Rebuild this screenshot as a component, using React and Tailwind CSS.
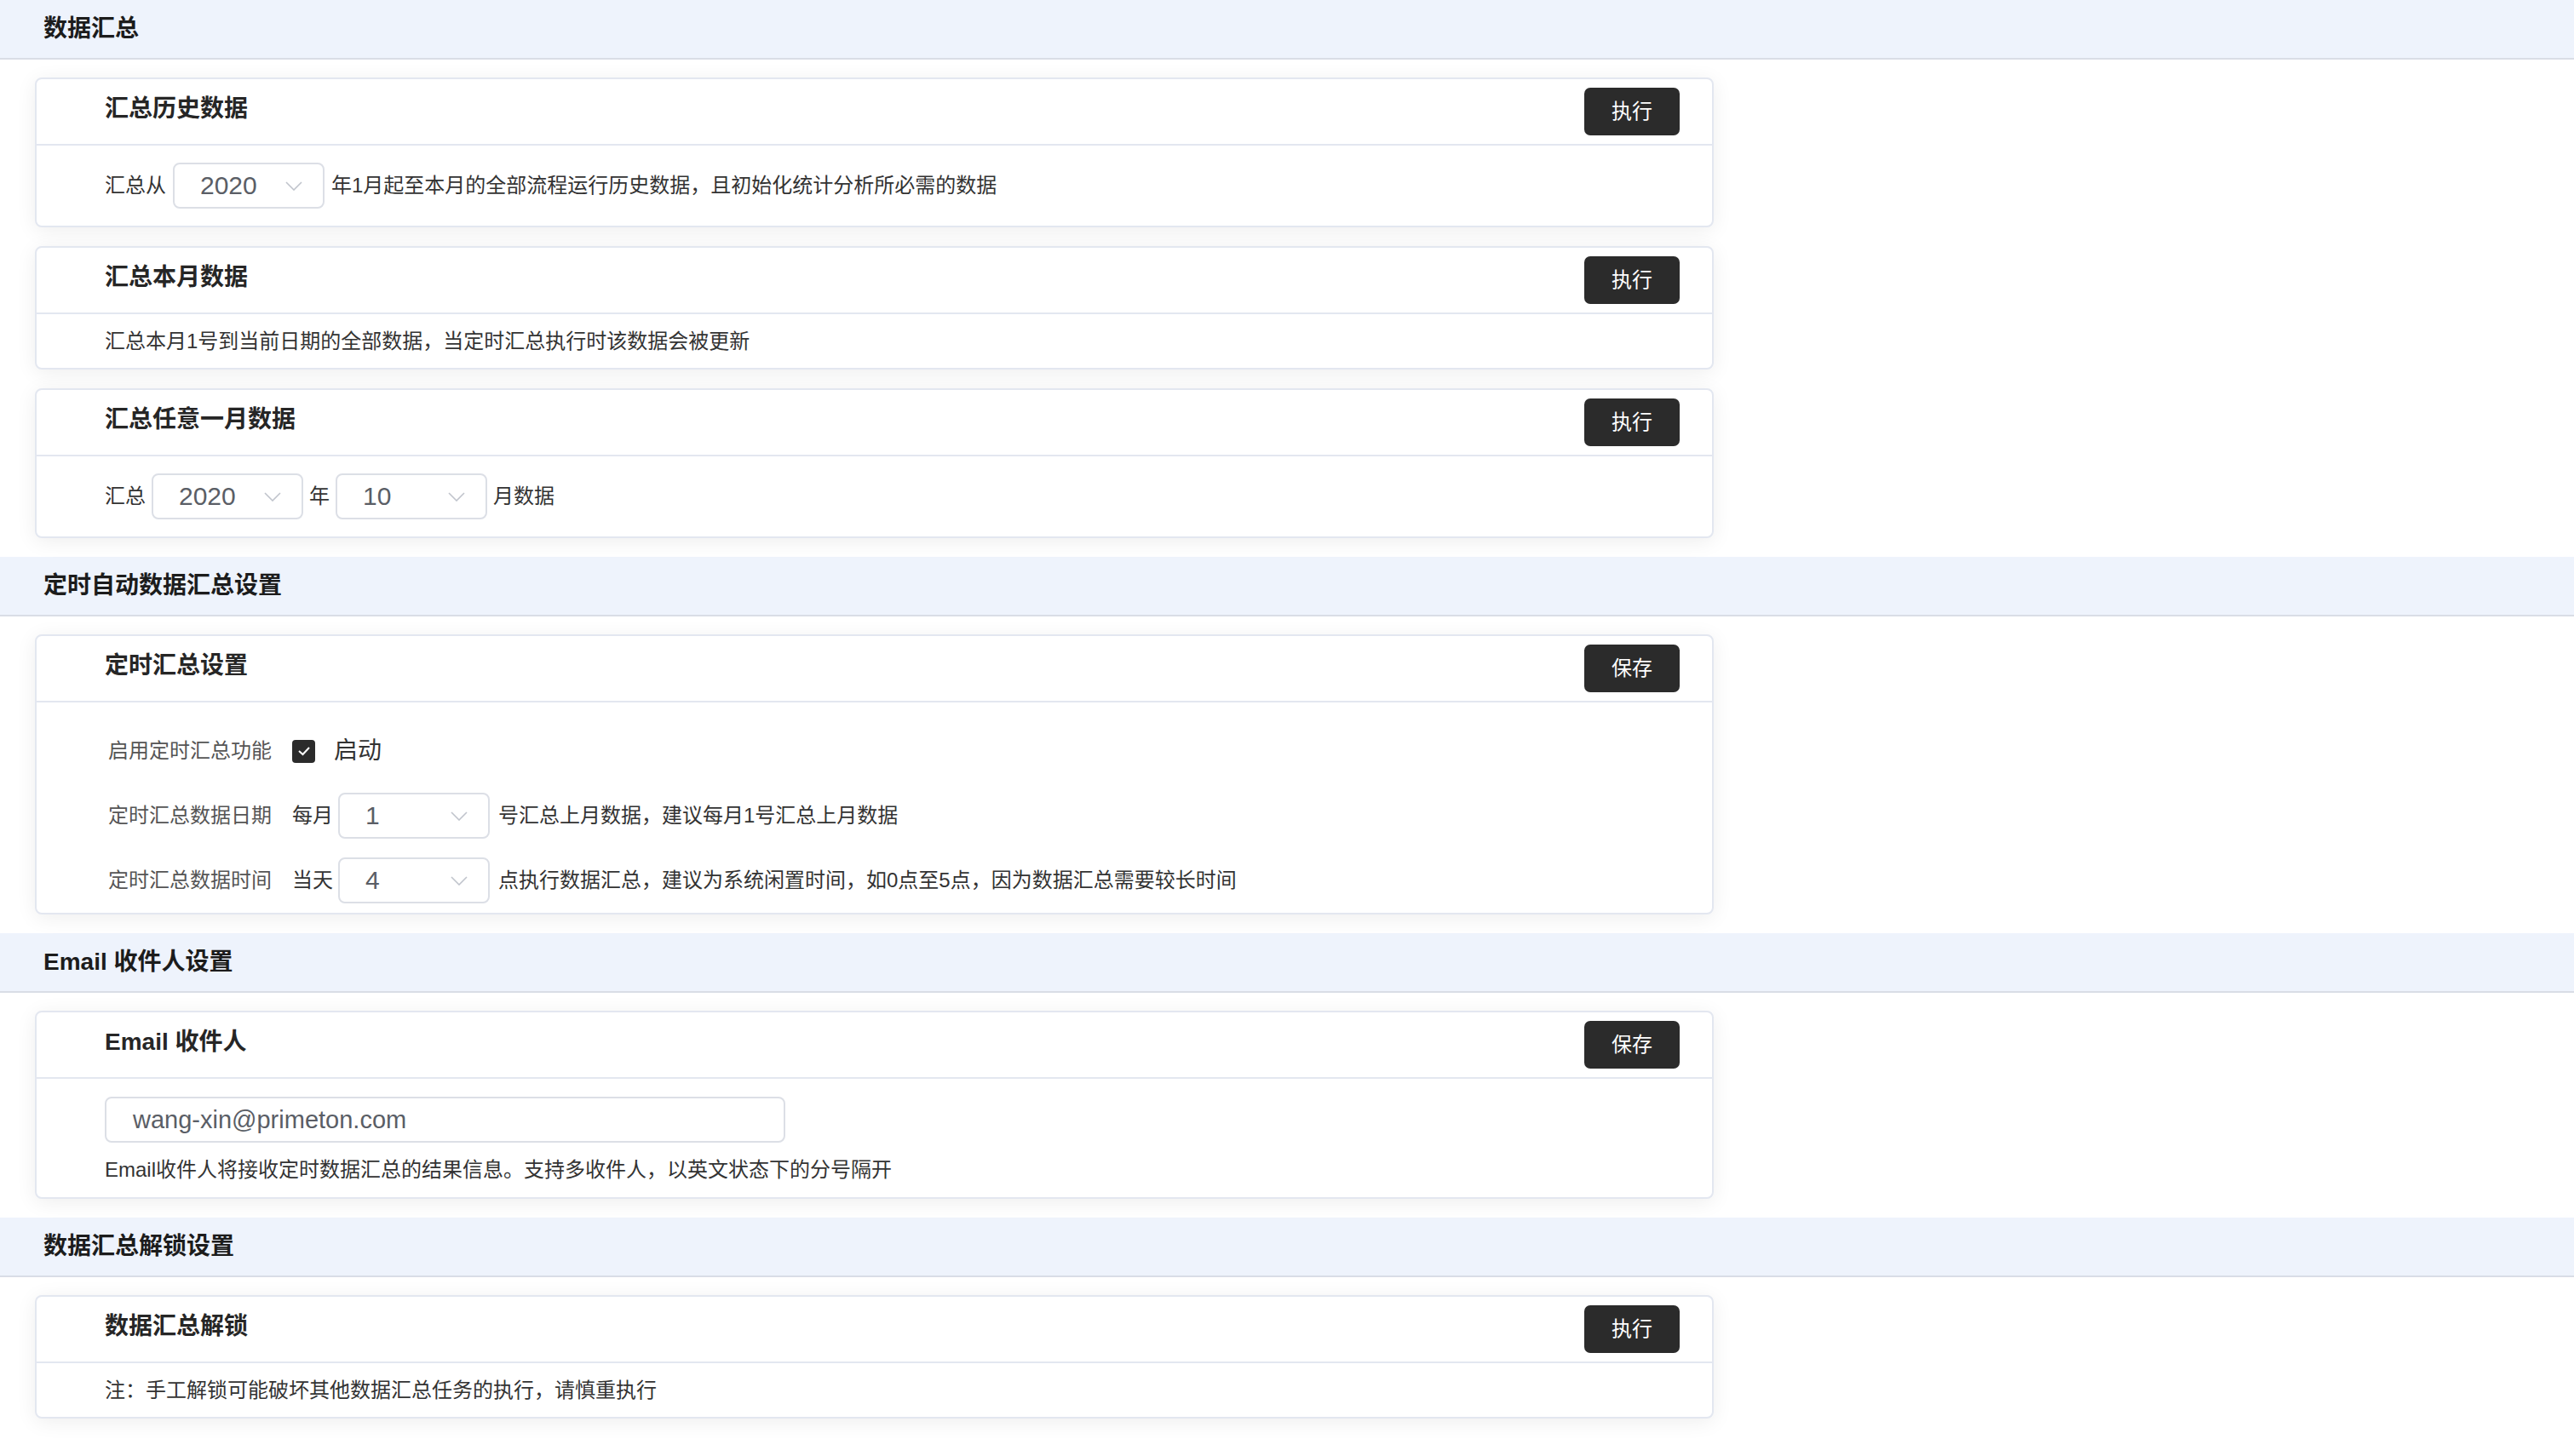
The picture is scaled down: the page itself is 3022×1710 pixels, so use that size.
import React from 'react'

const font = { fontFamily: '"Liberation Sans", "Noto Sans CJK SC", sans-serif' }

const SectionHeader = ({ title }) => {
    return <div className="h-[70px] flex items-center pl-[51px] bg-[#eef3fc] border-b-2 border-[#d9dde6]">
        <h1 className="text-[28px] leading-[34px] font-bold text-[#1c1c1c]">{title}</h1>
    </div>
}

const Chevron = () => (
    <svg width="20" height="11" viewBox="0 0 20 11" fill="none">
        <polyline points="1,1 10,10 19,1" stroke="#c0c4cc" strokeWidth="1.6" />
    </svg>
)

const Select = ({ value }) => {
    return <div className="w-[178px] h-[54px] flex items-center justify-between pl-[30px] pr-[24px] border-2 border-[#dcdfe6] rounded-[8px] bg-white">
        <span className="text-[30px] leading-[34px] text-[#5a5e66]">{value}</span>
        <Chevron />
    </div>
}

const Card = (props) => {
    return <div className="w-[1971px] ml-[41px] bg-white border-2 border-[#e3e7f0] rounded-[8px] shadow-[0_4px_24px_0_rgba(0,0,0,0.07)]">
        <div className="h-[78px] flex items-center justify-between pl-[80px] pr-[38px] border-b-2 border-[#e3e7f0]">
            <h2 className="text-[28px] leading-[34px] font-semibold text-[#262626] pb-[6px]">{props.title}</h2>
            <button className="w-[112px] h-[56px] rounded-[7px] bg-[#2b2b2b] text-white text-[24px] leading-[30px]">{props.action}</button>
        </div>
        <div className={props.bodyClass}>
            {props.children}
        </div>
    </div>
}

const Row = ({ label, children }) => {
    return <div className="h-[54px] flex items-center">
        <span className="w-[216px] text-[24px] leading-[30px] text-[#555]">{label}</span>
        {children}
    </div>
}

export default function App() {
    return <div className="w-[3022px] min-h-[1710px] bg-white text-[#333]" style={font}>
        <SectionHeader title="数据汇总" />
        <div className="flex flex-col gap-[22px] pt-[21px] pb-[22px]">
            <Card title="汇总历史数据" action="执行" bodyClass="h-[94px] flex items-center gap-[8px] px-[80px] text-[24px] leading-[30px]">
                <span>汇总从</span>
                <Select value="2020" />
                <span>年1月起至本月的全部流程运行历史数据，且初始化统计分析所必需的数据</span>
            </Card>
            <Card title="汇总本月数据" action="执行" bodyClass="h-[63px] flex items-center px-[80px] text-[24px] leading-[30px]">
                <span>汇总本月1号到当前日期的全部数据，当定时汇总执行时该数据会被更新</span>
            </Card>
            <Card title="汇总任意一月数据" action="执行" bodyClass="h-[94px] flex items-center gap-[7px] px-[80px] text-[24px] leading-[30px]">
                <span>汇总</span>
                <Select value="2020" />
                <span>年</span>
                <Select value="10" />
                <span>月数据</span>
            </Card>
        </div>

        <SectionHeader title="定时自动数据汇总设置" />
        <div className="flex flex-col gap-[22px] pt-[21px] pb-[22px]">
            <Card title="定时汇总设置" action="保存" bodyClass="h-[247px] flex flex-col gap-[22px] pt-[30px] pl-[84px] text-[24px] leading-[30px]">
                <Row label="启用定时汇总功能">
                    <span className="w-[27px] h-[27px] rounded-[4px] bg-[#2b2b2b] flex items-center justify-center">
                        <svg width="16" height="12" viewBox="0 0 16 12" fill="none">
                            <polyline points="2,6 6.5,10 14,2" stroke="#fff" strokeWidth="2" />
                        </svg>
                    </span>
                    <span className="ml-[22px] text-[28px] leading-[34px] text-[#333]">启动</span>
                </Row>
                <Row label="定时汇总数据日期">
                    <span className="mr-[6px]">每月</span>
                    <Select value="1" />
                    <span className="ml-[10px]">号汇总上月数据，建议每月1号汇总上月数据</span>
                </Row>
                <Row label="定时汇总数据时间">
                    <span className="mr-[6px]">当天</span>
                    <Select value="4" />
                    <span className="ml-[10px]">点执行数据汇总，建议为系统闲置时间，如0点至5点，因为数据汇总需要较长时间</span>
                </Row>
            </Card>
        </div>

        <SectionHeader title="Email 收件人设置" />
        <div className="flex flex-col gap-[22px] pt-[21px] pb-[22px]">
            <Card title="Email 收件人" action="保存" bodyClass="h-[139px] flex flex-col gap-[20px] pt-[21px] px-[80px] text-[24px] leading-[24px]">
                <div className="w-[799px] h-[54px] flex items-center pl-[31px] border-2 border-[#dcdfe6] rounded-[8px]">
                    <span className="text-[29px] leading-[34px] text-[#5a5e66]">wang-xin@primeton.com</span>
                </div>
                <span>Email收件人将接收定时数据汇总的结果信息。支持多收件人，以英文状态下的分号隔开</span>
            </Card>
        </div>

        <SectionHeader title="数据汇总解锁设置" />
        <div className="flex flex-col gap-[22px] pt-[21px] pb-[22px]">
            <Card title="数据汇总解锁" action="执行" bodyClass="h-[63px] flex items-center px-[80px] text-[24px] leading-[30px]">
                <span>注：手工解锁可能破坏其他数据汇总任务的执行，请慎重执行</span>
            </Card>
        </div>
    </div>
}
